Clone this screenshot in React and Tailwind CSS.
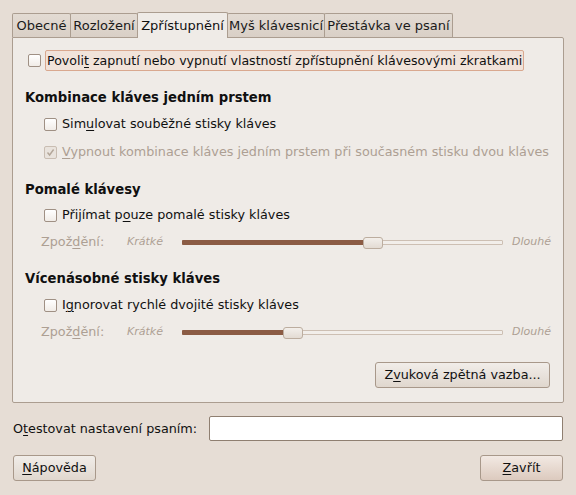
import React from "react";

const U = ({ children }) => (
  <span className="underline decoration-1 underline-offset-[2px]">{children}</span>
);

function Check({ checked = false, disabled = false }) {
  return (
    <span
      className={
        "flex w-[13px] h-[13px] shrink-0 items-center justify-center rounded-[2px] border " +
        (disabled
          ? "border-[#c9bdb2] bg-[#e9e3dd]"
          : "border-[#9f9084] bg-gradient-to-b from-[#ffffff] to-[#f1ece7]")
      }
    >
      {checked && (
        <svg width="9" height="9" viewBox="0 0 9 9">
          <path d="M1.5 4.5 L3.6 7 L7.6 1.5" fill="none" stroke="#b3a699" strokeWidth="1.4" />
        </svg>
      )}
    </span>
  );
}

function Tab({ w, active, children, first }) {
  return (
    <div
      className={
        "flex items-center justify-center border-l border-t border-r border-[#ab9d90] rounded-t-[2px] " +
        (first ? "" : "-ml-px ") +
        (active
          ? "relative z-10 h-[26px] -mb-px bg-[#efebe7] text-[#101010]"
          : "h-[24px] bg-gradient-to-b from-[#e3dbd3] to-[#d9cfc6] text-[#1a1a1a]")
      }
      style={{ width: w }}
    >
      <span>{children}</span>
    </div>
  );
}

function Slider({ pos }) {
  return (
    <div className="flex h-[20px] items-center pl-[16px]">
      <span className="w-[86px] text-[#ad9f93]">
        Zpož<U>d</U>ění:
      </span>
      <span className="w-[55px] text-[11px] italic text-[#ad9f93]">Krátké</span>
      <div className="relative h-[5px] w-[321px] rounded-[1px] border border-[#cdbfb3] bg-[#f2eeea]">
        <div
          className="absolute left-[-1px] top-[-1px] h-[5px] rounded-l-[1px] bg-[#8b5b44]"
          style={{ width: pos + 10 }}
        />
        <div
          className="absolute top-[-4px] h-[12px] w-[20px] rounded-[3px] border border-[#bcad9f] bg-gradient-to-b from-[#f3efeb] to-[#e3dbd3]"
          style={{ left: pos }}
        />
      </div>
      <span className="ml-[9px] text-[11px] italic text-[#ad9f93]">Dlouhé</span>
    </div>
  );
}

function Button({ children, className = "", def = false }) {
  return (
    <div
      className={
        "flex h-[26px] items-center justify-center rounded-[3px] border border-[#a8988a] text-[#101010] " +
        (def
          ? "bg-gradient-to-b from-[#f2e9e3] to-[#dccabe] "
          : "bg-gradient-to-b from-[#f1ede9] to-[#e0d7ce] ") +
        className
      }
    >
      <span>{children}</span>
    </div>
  );
}

export default function App() {
  return (
    <div
      className="flex h-[495px] w-[576px] flex-col bg-[#e6ddd5] pt-[12px] text-[12.75px] leading-[16px] text-[#101010]"
      style={{ fontFamily: '"DejaVu Sans", sans-serif' }}
    >
      <div className="px-[12px]">
        <div className="flex h-[25px] items-end text-[13px]">
          <Tab w={59} first>Obecné</Tab>
          <Tab w={68}>Rozložení</Tab>
          <Tab w={91} active>Zpřístupnění</Tab>
          <Tab w={98}>Myš klávesnicí</Tab>
          <Tab w={129}>Přestávka ve psaní</Tab>
        </div>
        <div className="flex h-[366px] w-[552px] flex-col rounded-b-[2px] rounded-tr-[2px] border border-[#ab9d90] bg-[#efebe7] pl-[12px]">
          <div className="ml-[3px] mt-[12px] flex h-[21px] items-center gap-[4px]">
            <Check />
            <span className="block h-[21px] rounded-[2px] border border-[#d9a88f] bg-[#f1e3da] px-[1px] text-[12.6px] leading-[19px]">
              Povoli<U>t</U> zapnutí nebo vypnutí vlastností zpřístupnění klávesovými zkratkami
            </span>
          </div>

          <div className="mt-[19px] h-[16px] text-[13.2px] font-bold">Kombinace kláves jedním prstem</div>
          <div className="ml-[19px] mt-[8px] flex h-[20px] items-center gap-[5px]">
            <Check />
            <span>
              Sim<U>u</U>lovat souběžné stisky kláves
            </span>
          </div>
          <div className="ml-[19px] mt-[8px] flex h-[20px] items-center gap-[5px]">
            <Check checked disabled />
            <span className="text-[#ad9f93]">
              <U>V</U>ypnout kombinace kláves jedním prstem při současném stisku dvou kláves
            </span>
          </div>

          <div className="mt-[20px] h-[16px] text-[13.2px] font-bold">Pomalé klávesy</div>
          <div className="ml-[19px] mt-[7px] flex h-[20px] items-center gap-[5px]">
            <Check />
            <span>
              Přijímat p<U>o</U>uze pomalé stisky kláves
            </span>
          </div>
          <div className="mt-[7px]">
            <Slider pos={180} />
          </div>

          <div className="mt-[19px] h-[16px] text-[13.2px] font-bold">Vícenásobné stisky kláves</div>
          <div className="ml-[19px] mt-[8px] flex h-[20px] items-center gap-[5px]">
            <Check />
            <span>
              I<U>g</U>norovat rychlé dvojité stisky kláves
            </span>
          </div>
          <div className="mt-[7px]">
            <Slider pos={100} />
          </div>

          <div className="mr-[13px] mt-[20px] flex justify-end">
            <Button className="w-[175px]">
              Z<U>v</U>uková zpětná vazba...
            </Button>
          </div>
        </div>
      </div>

      <div className="mt-[13px] flex h-[25px] items-center px-[13px]">
        <span className="w-[196px]">
          O<U>t</U>estovat nastavení psaním:
        </span>
        <div className="h-[25px] flex-1 rounded-[2px] border border-[#8f7f71] bg-white" />
      </div>

      <div className="mt-[14px] flex items-center justify-between px-[13px]">
        <Button className="w-[83px]">
          <U>N</U>ápověda
        </Button>
        <Button className="w-[83px]" def>
          <U>Z</U>avřít
        </Button>
      </div>
    </div>
  );
}
